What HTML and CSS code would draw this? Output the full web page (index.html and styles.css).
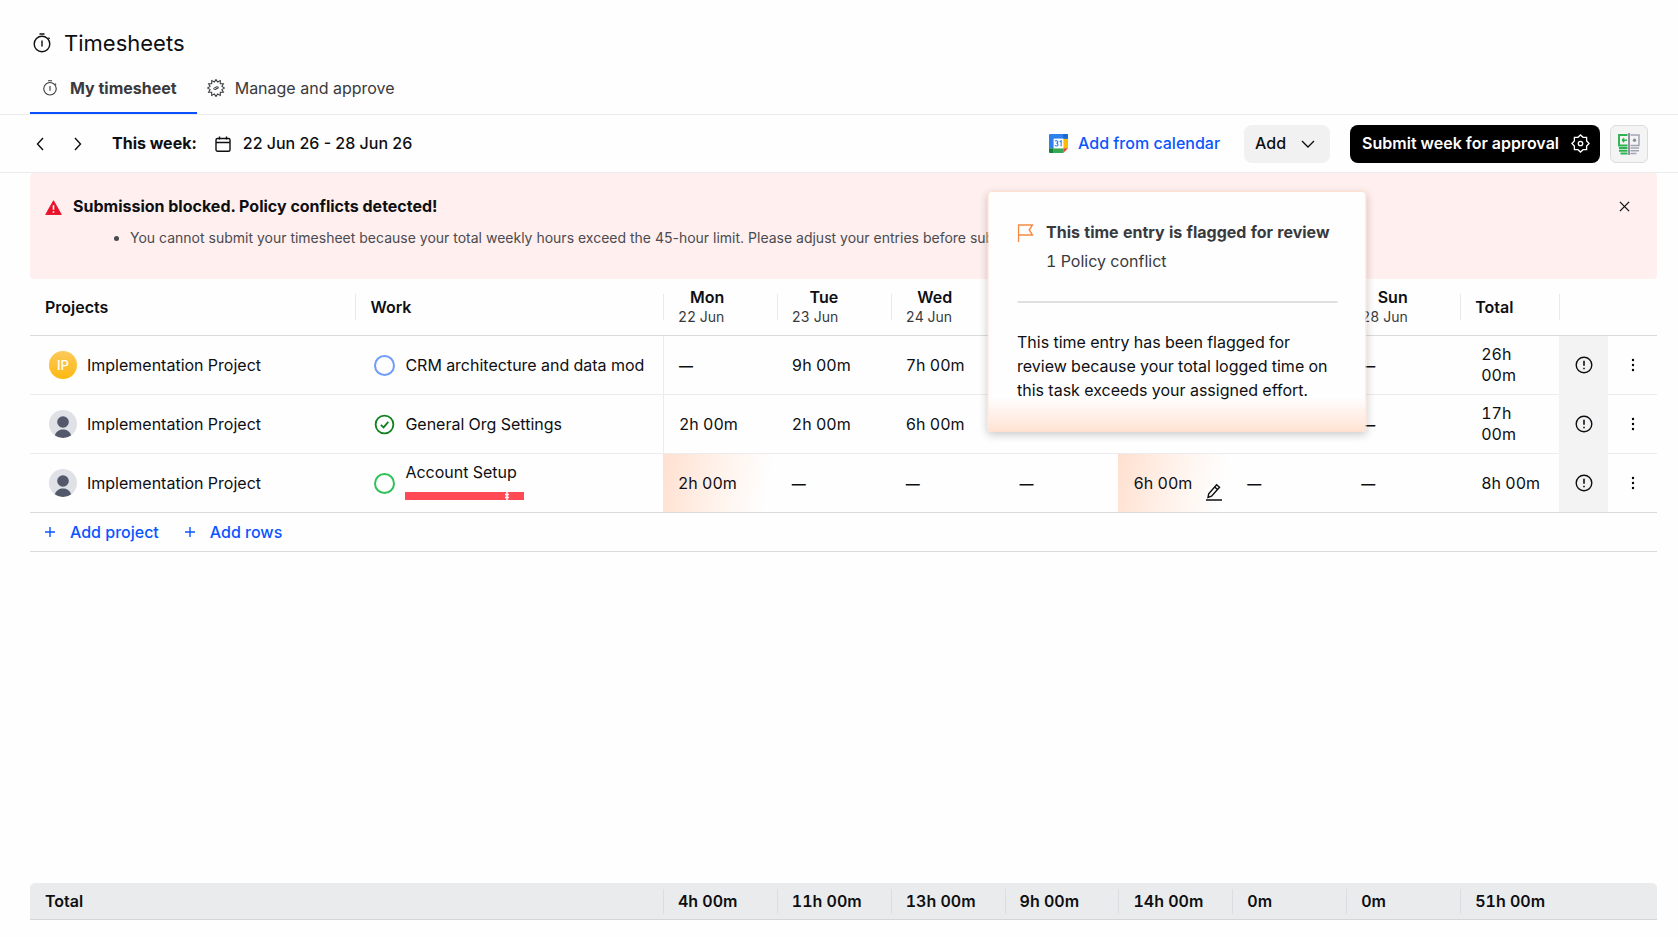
FILE: index.html
```html
<!DOCTYPE html>
<html lang="en">
<head>
    <meta charset="UTF-8">
    <meta name="viewport" content="width=device-width, initial-scale=1.0">
    <title>Timesheets</title>
    <link rel="stylesheet" href="styles.css">
</head>
<body>
    <!-- Shared icons -->
    <svg class="sprite" aria-hidden="true">
        <symbol id="i-timer" viewBox="0 0 20 20">
            <circle cx="10" cy="11" r="7.800"/>
            <path d="M10 7.500v6M7.500 1h5M16.300 4.700l1.400 1.100"/>
        </symbol>
        <symbol id="i-alert" viewBox="0 0 18 18">
            <circle cx="9" cy="9" r="7.800"/>
            <path d="M9 4.800v5M9 11.800v1.400" stroke-width="1.600"/>
        </symbol>
        <symbol id="i-dots" viewBox="0 0 4 14">
            <circle cx="2" cy="2" r="1.200"/>
            <circle cx="2" cy="7" r="1.200"/>
            <circle cx="2" cy="12" r="1.200"/>
        </symbol>
        <symbol id="i-user" viewBox="0 0 28 28">
            <circle cx="14" cy="14" r="14" fill="#dfe1e6"/>
            <circle cx="14" cy="12" r="5.800" fill="#53586a"/>
            <path d="M5.800 25.200c1.400-4 4.600-5.800 8.200-5.800s6.800 1.800 8.200 5.800A14 14 0 0 1 14 28a14 14 0 0 1-8.200-2.800z" fill="#53586a"/>
        </symbol>
    </svg>

    <header class="page-header">
        <h1><svg class="icon title-icon"><use href="#i-timer"/></svg>Timesheets</h1>
        <nav class="tabs">
            <a href="#mine" class="tab active"><svg class="icon tab-timer"><use href="#i-timer"/></svg>My timesheet</a>
            <a href="#manage" class="tab">
                <svg class="icon tab-gear" viewBox="0 0 20 20">
                    <path d="M10 .5 11.760 3.440 14.750 1.770 14.800 5.200 18.230 5.250 16.560 8.240 19.500 10 16.560 11.760 18.230 14.750 14.800 14.800 14.750 18.230 11.760 16.560 10 19.500 8.240 16.560 5.250 18.230 5.200 14.800 1.770 14.750 3.440 11.760 .5 10 3.440 8.240 1.770 5.250 5.200 5.200 5.250 1.770 8.240 3.440z"/>
                    <path d="M7 10.700l3.800-2.200M9.200 11.700l3.800-2.200M7 10.700l2.200 1M10.800 8.500l2.200 1"/>
                </svg>Manage and approve</a>
        </nav>
    </header>

    <div class="toolbar">
        <button class="arrow" aria-label="Previous week"><svg class="icon" viewBox="0 0 8 14"><path d="M7 1 1.500 7 7 13"/></svg></button>
        <button class="arrow" aria-label="Next week"><svg class="icon" viewBox="0 0 8 14"><path d="m1 1 5.500 6L1 13"/></svg></button>
        <span class="week-label">This week:</span>
        <button class="range">
            <svg class="icon" viewBox="0 0 16 16"><rect x="1" y="2.500" width="14" height="12.700" rx="1.500"/><path d="M1 6.500h14M4.500.5v3M11.500.5v3"/></svg>
            22 Jun 26 - 28 Jun 26
        </button>
        <div class="actions">
            <a href="#calendar" class="calendar-link">
                <svg viewBox="0 0 20 20">
                    <path d="M1 0h18a1 1 0 0 1 1 1v4H5v10H0V1a1 1 0 0 1 1-1z" fill="#2f80ed"/>
                    <path d="M0 15h5v5H1a1 1 0 0 1-1-1z" fill="#188038"/>
                    <path d="M5 15h10v5H5z" fill="#34a853"/>
                    <path d="M15 5h5v10h-5z" fill="#fbbc04"/>
                    <path d="M15 15h5l-5 5z" fill="#ea4335"/>
                    <path d="M15 0h4a1 1 0 0 1 1 1v4h-5z" fill="#1967d2"/>
                    <path d="M5 5h10v10H5z" fill="#fff"/>
                    <path d="M6.500 7.600c.6-.9 2.800-.8 2.800.7 0 1-.8 1.400-1.600 1.400 1 0 1.800.5 1.800 1.500 0 1.700-2.500 1.900-3.200.7M11.200 8.100l1.600-.9v5.600" fill="none" stroke="#2f80ed" stroke-width="1.200"/>
                </svg>
                Add from calendar
            </a>
            <button class="btn-add">Add <svg class="icon" viewBox="0 0 14 8"><path d="m1 1 6 6 6-6"/></svg></button>
            <button class="btn-submit">Submit week for approval
                <svg class="icon" viewBox="0 0 20 20">
                    <path d="M10 1 12.680 3.530 16.400 3.600 16.470 7.320 19 10 16.470 12.680 16.400 16.400 12.680 16.470 10 19 7.320 16.470 3.600 16.400 3.530 12.680 1 10 3.530 7.320 3.600 3.600 7.320 3.530z"/>
                    <circle cx="10" cy="10" r="2.300"/>
                </svg>
            </button>
            <button class="btn-compare" aria-label="Compare timesheets">
                <svg viewBox="0 0 22 22">
                    <path d="M9.500 2H1v10.500h8.500M1 15h8.500M1 17.700h8.500M2.500 20.500h7" fill="none" stroke="#2fb352" stroke-width="1.900"/>
                    <path d="M4 7.300h5M4.200 7.300l2-2M4.200 7.300l2 2" fill="none" stroke="#2fb352" stroke-width="1.500"/>
                    <path d="M12.500 2h8.500v10.500h-8.500M12.500 15H21M12.500 17.700H21M12.500 20.500h6" fill="none" stroke="#a3a5b4" stroke-width="1.500"/>
                    <circle cx="16.500" cy="7.300" r="1.700" fill="#8b8e9b"/>
                    <path d="M11 0v22" stroke="#666977" stroke-width="1.400"/>
                </svg>
            </button>
        </div>
    </div>

    <main class="content">
        <section class="alert">
            <svg class="alert-icon" viewBox="0 0 18 16">
                <path d="M9 .8 17.300 15.500H.7z" fill="#e8132b" stroke="#e8132b" stroke-linejoin="round"/>
                <path d="M9 5.500v5M9 12v1.700" stroke="#fff" stroke-width="1.700"/>
            </svg>
            <div class="alert-body">
                <h2>Submission blocked. Policy conflicts detected!</h2>
                <ul>
                    <li>You cannot submit your timesheet because your total weekly hours exceed the 45-hour limit. Please adjust your entries before submitting.</li>
                </ul>
            </div>
            <button class="close" aria-label="Close"><svg class="icon" viewBox="0 0 12 12"><path d="m1 1 10 10M11 1 1 11"/></svg></button>
        </section>

        <table class="sheet">
            <colgroup>
                <col class="col-project"><col class="col-work">
                <col span="7">
                <col class="col-total"><col class="col-icon"><col class="col-icon">
            </colgroup>
            <thead>
                <tr>
                    <th>Projects</th>
                    <th>Work</th>
                    <th><span class="day">Mon<small>22 Jun</small></span></th>
                    <th><span class="day">Tue<small>23 Jun</small></span></th>
                    <th><span class="day">Wed<small>24 Jun</small></span></th>
                    <th><span class="day">Thu<small>25 Jun</small></span></th>
                    <th><span class="day">Fri<small>26 Jun</small></span></th>
                    <th><span class="day">Sat<small>27 Jun</small></span></th>
                    <th><span class="day">Sun<small>28 Jun</small></span></th>
                    <th>Total</th>
                    <th colspan="2"></th>
                </tr>
            </thead>
            <tbody>
                <tr>
                    <td><div class="project"><span class="avatar">IP</span>Implementation Project</div></td>
                    <td><div class="work"><span class="status blue"></span><span class="work-name">CRM architecture and data mod</span></div></td>
                    <td class="first-day empty">—</td>
                    <td>9h 00m</td>
                    <td>7h 00m</td>
                    <td>4h 00m</td>
                    <td>6h 00m</td>
                    <td class="empty">—</td>
                    <td class="empty">—</td>
                    <td class="row-total">26h 00m</td>
                    <td class="flag"><svg class="icon"><use href="#i-alert"/></svg></td>
                    <td class="more"><button aria-label="Row menu"><svg><use href="#i-dots"/></svg></button></td>
                </tr>
                <tr>
                    <td><div class="project"><svg class="user"><use href="#i-user"/></svg>Implementation Project</div></td>
                    <td>
                        <div class="work">
                            <svg class="status-done" viewBox="0 0 22 22"><circle cx="11" cy="11" r="9.300"/><path d="m7.200 11.300 2.800 2.700 5-5.700"/></svg>
                            <span class="work-name">General Org Settings</span>
                        </div>
                    </td>
                    <td class="first-day">2h 00m</td>
                    <td>2h 00m</td>
                    <td>6h 00m</td>
                    <td>5h 00m</td>
                    <td>2h 00m</td>
                    <td class="empty">—</td>
                    <td class="empty">—</td>
                    <td class="row-total">17h 00m</td>
                    <td class="flag"><svg class="icon"><use href="#i-alert"/></svg></td>
                    <td class="more"><button aria-label="Row menu"><svg><use href="#i-dots"/></svg></button></td>
                </tr>
                <tr>
                    <td><div class="project"><svg class="user"><use href="#i-user"/></svg>Implementation Project</div></td>
                    <td>
                        <div class="work">
                            <span class="status green"></span>
                            <div class="work-name">Account Setup
                                <svg class="effort" viewBox="0 0 119 8"><path d="M0 0h119v8H0z" fill="#ff4a55"/><path d="M102 0v8M100 2.500h4M100 5.500h4" stroke="#fff" stroke-width="1.500"/></svg>
                            </div>
                        </div>
                    </td>
                    <td class="flagged">2h 00m</td>
                    <td class="empty">—</td>
                    <td class="empty">—</td>
                    <td class="empty">—</td>
                    <td class="flagged editing">
                        6h 00m
                        <button class="edit" aria-label="Edit entry"><svg class="icon" viewBox="0 0 16 18"><path d="M2 14.500 2.700 10.800 10.600 1.700 13.500 4.200 5.500 13.200zM8.700 4l2.800 2.500M0 17h16"/></svg></button>
                        <div class="popover" role="dialog">
                            <div class="popover-head">
                                <svg viewBox="0 0 16 18"><path d="M1 18V1h14l-3.300 5L15 11H1" fill="none" stroke="#f58a42" stroke-width="1.400"/></svg>
                                <div>
                                    <h3>This time entry is flagged for review</h3>
                                    <p>1 Policy conflict</p>
                                </div>
                            </div>
                            <p class="popover-text">This time entry has been flagged for review because your total logged time on this task exceeds your assigned effort.</p>
                        </div>
                    </td>
                    <td class="empty">—</td>
                    <td class="empty">—</td>
                    <td class="row-total">8h 00m</td>
                    <td class="flag"><svg class="icon"><use href="#i-alert"/></svg></td>
                    <td class="more"><button aria-label="Row menu"><svg><use href="#i-dots"/></svg></button></td>
                </tr>
            </tbody>
        </table>

        <div class="add-bar">
            <button><svg class="icon" viewBox="0 0 10 10"><path d="M5 0v10M0 5h10"/></svg>Add project</button>
            <button><svg class="icon" viewBox="0 0 10 10"><path d="M5 0v10M0 5h10"/></svg>Add rows</button>
        </div>

        <table class="totals">
            <colgroup>
                <col class="col-project"><col class="col-work">
                <col span="7">
                <col class="col-total"><col class="col-icon"><col class="col-icon">
            </colgroup>
            <tbody>
                <tr>
                    <th colspan="2">Total</th>
                    <td>4h 00m</td>
                    <td>11h 00m</td>
                    <td>13h 00m</td>
                    <td>9h 00m</td>
                    <td>14h 00m</td>
                    <td>0m</td>
                    <td>0m</td>
                    <td colspan="3">51h 00m</td>
                </tr>
            </tbody>
        </table>
    </main>
</body>
</html>
```

FILE: styles.css
```css
* {
    box-sizing: border-box;
}
body {
    margin: 0;
    min-height: 100vh;
    display: flex;
    flex-direction: column;
    font-family: Inter, "Liberation Sans", sans-serif;
    font-size: 16px;
    line-height: 21px;
    color: #0e0f12;
    background: #fefefe;
}
h1, h2, h3, p, ul {
    margin: 0;
}
button {
    font: inherit;
    color: inherit;
    background: none;
    border: none;
    padding: 0;
    cursor: pointer;
}
a {
    color: inherit;
    text-decoration: none;
}
svg {
    flex: none;
}
.sprite {
    position: absolute;
    width: 0;
    height: 0;
}
.icon {
    fill: none;
    stroke: currentColor;
    stroke-width: 1.4;
}

/* Header */
.page-header {
    padding: 28px 30px 0;
    border-bottom: 1px solid #ececee;
}
h1 {
    display: flex;
    align-items: center;
    gap: 12px;
    padding-left: 2px;
    font-size: 22px;
    line-height: 30px;
    font-weight: 400;
}
.title-icon {
    width: 20px;
    height: 20px;
}
.tabs {
    display: flex;
    margin-top: 4px;
}
.tab {
    display: flex;
    align-items: center;
    gap: 10px;
    height: 52px;
    padding: 2px 10px 0;
    color: #393a3d;
    border-bottom: 2px solid transparent;
}
.tab.active {
    gap: 12px;
    padding: 2px 20px 0 12px;
    font-weight: 700;
    border-color: #0b50ff;
}
.tab-timer {
    width: 16px;
    height: 16px;
}
.tab-gear {
    width: 18px;
    height: 18px;
    stroke-width: 1.2;
}

/* Toolbar */
.toolbar {
    display: flex;
    align-items: center;
    height: 58px;
    padding: 0 30px;
    border-bottom: 1px solid #ececee;
}
.arrow {
    display: flex;
    justify-content: center;
    width: 20px;
    margin-right: 18px;
}
.arrow svg {
    width: 8px;
    height: 14px;
}
.week-label {
    margin-left: 6px;
    font-weight: 700;
}
.range {
    display: flex;
    align-items: center;
    gap: 12px;
    margin-left: 18px;
    font-weight: 500;
}
.range svg {
    width: 16px;
    height: 16px;
}
.actions {
    display: flex;
    align-items: center;
    margin-left: auto;
    font-weight: 500;
}
.calendar-link {
    display: flex;
    align-items: center;
    gap: 10px;
    margin-right: 24px;
    color: #0a55ff;
}
.calendar-link svg {
    width: 19px;
    height: 19px;
}
.btn-add,
.btn-submit,
.btn-compare {
    display: flex;
    align-items: center;
    height: 38px;
    border-radius: 8px;
}
.btn-add {
    gap: 15px;
    padding: 0 15px 0 11px;
    margin-right: 20px;
    background: #f1f1f1;
}
.btn-add svg {
    width: 14px;
    height: 8px;
}
.btn-submit {
    gap: 12px;
    padding: 0 10px 0 12px;
    margin-right: 10px;
    font-weight: 600;
    color: #fff;
    background: #000;
}
.btn-submit svg {
    width: 19px;
    height: 19px;
}
.btn-compare {
    justify-content: center;
    width: 38px;
    background: #f4f4f5;
    border: 1px solid #dddde0;
    border-radius: 6px;
}
.btn-compare svg {
    width: 22px;
    height: 22px;
}

.content {
    flex: 1;
    display: flex;
    flex-direction: column;
    padding: 0 21px 17px 30px;
}

/* Blocked submission alert */
.alert {
    display: flex;
    gap: 11px;
    height: 106px;
    padding: 23px 27px 0 15px;
    border-radius: 4px;
    background: #ffefee;
}
.alert-icon {
    width: 17px;
    height: 15px;
    margin-top: 4px;
}
.alert-body {
    flex: 1;
}
.alert h2 {
    font-size: 16px;
    line-height: 21px;
    font-weight: 700;
}
.alert ul {
    margin-top: 10px;
    padding-left: 57px;
    font-size: 14px;
    color: #4a4b50;
}
.close {
    align-self: flex-start;
    display: flex;
    padding-top: 5px;
}
.close svg {
    width: 11px;
    height: 11px;
}

/* Timesheet */
table {
    width: 100%;
    table-layout: fixed;
    border-collapse: separate;
    border-spacing: 0;
    font-variant-numeric: tabular-nums;
}
.col-project {
    width: 20%;
}
.col-work {
    width: 18.9%;
}
.col-total {
    width: 6.1%;
}
.col-icon {
    width: 3%;
}
th {
    padding: 0 15px;
    font-weight: 600;
    text-align: left;
}
td {
    padding: 0 15px;
}
.sheet th {
    height: 57px;
    border-bottom: 1px solid #d9dadd;
    background: linear-gradient(#e9eaec, #e9eaec) no-repeat 0 15px / 1px 26px;
}
.sheet th:first-child {
    background: none;
}
.day {
    display: inline-block;
    text-align: right;
    line-height: 20px;
}
.day small {
    display: block;
    font-size: 14px;
    line-height: 19px;
    font-weight: 400;
    color: #393a3d;
}
.sheet td {
    height: 59px;
    border-bottom: 1px solid #ececee;
}
.sheet tr:last-child td {
    border-color: #d9dadd;
}
.sheet td.first-day {
    border-left: 1px solid #ececee;
}
.empty {
    font-size: 14px;
    font-weight: 600;
}
.project {
    display: flex;
    align-items: center;
    gap: 10px;
    padding-left: 4px;
}
.avatar,
.user {
    width: 28px;
    height: 28px;
}
.avatar {
    display: flex;
    align-items: center;
    justify-content: center;
    border-radius: 50%;
    font-size: 13px;
    font-weight: 500;
    color: #fff;
    background: linear-gradient(#fcc95c, #fdb90f);
}
.work {
    display: flex;
    align-items: center;
    gap: 10px;
    padding-left: 4px;
}
.work-name {
    white-space: nowrap;
}
.status {
    flex: none;
    width: 21px;
    height: 21px;
    border: 2px solid;
    border-radius: 50%;
}
.status.blue {
    color: #6f9cfb;
}
.status.green {
    color: #30c25a;
}
.status-done {
    width: 21px;
    height: 21px;
    fill: none;
    stroke: #11811f;
    stroke-width: 1.9;
}
.effort {
    display: block;
    width: 119px;
    height: 8px;
    margin: 9px 0 5px;
}
.sheet .row-total {
    padding: 0 14px 0 21px;
}
.sheet .flag {
    padding: 0;
    text-align: center;
    background: #f3f3f4;
    border-color: #f3f3f4;
}
.flag svg {
    display: block;
    width: 18px;
    height: 18px;
    margin: 0 auto;
}
.sheet .more {
    padding: 0;
}
.more button {
    display: block;
    margin: 0 auto;
}
.more svg {
    display: block;
    width: 4px;
    height: 14px;
}
.flagged {
    background: linear-gradient(100deg, #ffe0d0, #fff3ec 50%, #fefefe 90%);
}
.editing {
    position: relative;
}
.edit {
    position: absolute;
    right: 10px;
    bottom: 11px;
    display: flex;
}
.edit svg {
    width: 16px;
    height: 18px;
}

.popover {
    position: absolute;
    bottom: calc(100% + 22px);
    left: 51%;
    transform: translateX(-50%);
    z-index: 10;
    width: 379px;
    height: 241px;
    padding: 29px 28px 0 29px;
    border: 1px solid #ffdfcd;
    border-radius: 4px;
    background: linear-gradient(#fefefe 86%, #ffe3d3);
    box-shadow: 0 3px 8px rgba(0, 0, 0, 0.2);
}
.popover-head {
    display: flex;
    gap: 13px;
    padding-bottom: 29px;
    border-bottom: 2px solid #dfdfe1;
}
.popover-head svg {
    width: 16px;
    height: 18px;
    margin-top: 3px;
}
.popover h3 {
    font-size: 16px;
    line-height: 22px;
    font-weight: 700;
    color: #393a3d;
    white-space: nowrap;
}
.popover-head p {
    margin-top: 7px;
    line-height: 22px;
    color: #393a3d;
}
.popover-text {
    margin-top: 27px;
    line-height: 24px;
}

.add-bar {
    display: flex;
    gap: 26px;
    height: 39px;
    padding-left: 15px;
    border-bottom: 1px solid #d9dadd;
}
.add-bar button {
    display: flex;
    align-items: center;
    gap: 15px;
    font-weight: 500;
    color: #0a55ff;
}
.add-bar svg {
    width: 10px;
    height: 10px;
}

.totals {
    margin-top: auto;
    border-radius: 5px 5px 0 0;
    border-bottom: 1px solid #d5d5d8;
    background: #eaebec;
    font-weight: 600;
}
.totals th,
.totals td {
    height: 36px;
}
.totals td {
    background: linear-gradient(#dcdde0, #dcdde0) no-repeat 0 6px / 1px 25px;
}
```
